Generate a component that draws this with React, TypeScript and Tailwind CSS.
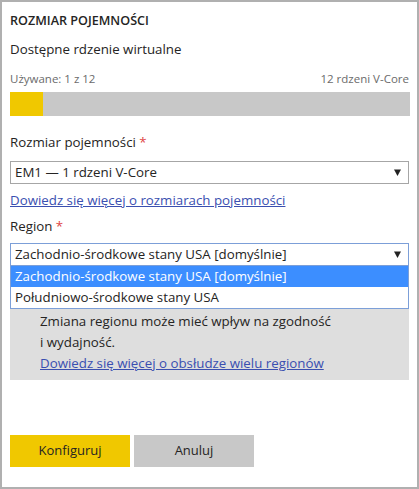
const font = { fontFamily: '"Open Sans", "Noto Sans", sans-serif' };

function Arrow() {
  return (
    <svg width="7" height="7" viewBox="0 0 7 7" className="shrink-0">
      <path d="M0 0.5 H7 L3.5 7 Z" fill="#222" />
    </svg>
  );
}

export default function App() {
  return (
    <div
      className="w-[419px] h-[489px] bg-white border-2 border-[#b0b0b0] px-2 text-[#252423] flex flex-col"
      style={font}
    >
      <h2 className="mt-[11px] text-[12.6px] leading-[16px] font-semibold">ROZMIAR POJEMNOŚCI</h2>
      <p className="mt-[10px] text-[13.3px] leading-[20px]">Dostępne rdzenie wirtualne</p>

      <div className="mt-[12px] flex justify-between text-[11.5px] leading-[16px] text-[#6b6b6b]">
        <span>Używane: 1 z 12</span>
        <span>12 rdzeni V-Core</span>
      </div>
      <div className="mt-[5px] h-6 w-[400px] bg-[#c8c8c8]">
        <div className="h-full w-[33px] bg-[#f0c800]" />
      </div>

      <label className="mt-[16px] text-[13.3px] leading-[20px]">
        Rozmiar pojemności <span className="text-[#e04545]">*</span>
      </label>
      <div className="mt-[9px] h-[23px] border border-[#a6a6a6] flex items-center justify-between pl-[4px] pr-[7px] text-[13.3px]">
        <span>EM1 — 1 rdzeni V-Core</span>
        <Arrow />
      </div>
      <a href="#" className="mt-[6px] text-[13.3px] leading-[20px] text-[#3a4fb0] underline self-start">
        Dowiedz się więcej o rozmiarach pojemności
      </a>

      <label className="mt-[6px] text-[13.3px] leading-[20px]">
        Region <span className="text-[#e04545]">*</span>
      </label>

      <div className="relative mt-[7px]">
        <div className="h-[23px] border border-[#7c9fd8] flex items-center justify-between pl-[4px] pr-[7px] text-[13.3px]">
          <span>Zachodnio-środkowe stany USA [domyślnie]</span>
          <Arrow />
        </div>

        <div className="mt-4 bg-[#dedede] pl-[30px] pt-[8px] pb-[6px] text-[13.3px] leading-[21px]">
          <p className="whitespace-nowrap">Wybrany region przypisuje dane do tej pojemności.</p>
          <p>Zmiana regionu może mieć wpływ na zgodność</p>
          <p>i wydajność.</p>
          <a href="#" className="text-[#3a4fb0] underline">
            Dowiedz się więcej o obsłudze wielu regionów
          </a>
        </div>

        <ul className="absolute left-0 right-0 top-[23px] border border-t-0 border-[#7c9fd8] bg-white text-[13.3px]">
          <li className="h-[21px] flex items-center pl-[4px] bg-[#3c8eff] text-white">
            Zachodnio-środkowe stany USA [domyślnie]
          </li>
          <li className="h-[21px] flex items-center pl-[4px]">Południowo-środkowe stany USA</li>
        </ul>
      </div>

      <div className="mt-[55px] flex gap-1">
        <button className="w-[120px] h-[32px] bg-[#f0c800] text-[13px]">Konfiguruj</button>
        <button className="w-[120px] h-[32px] bg-[#c8c8c8] text-[13px]">Anuluj</button>
      </div>
    </div>
  );
}
